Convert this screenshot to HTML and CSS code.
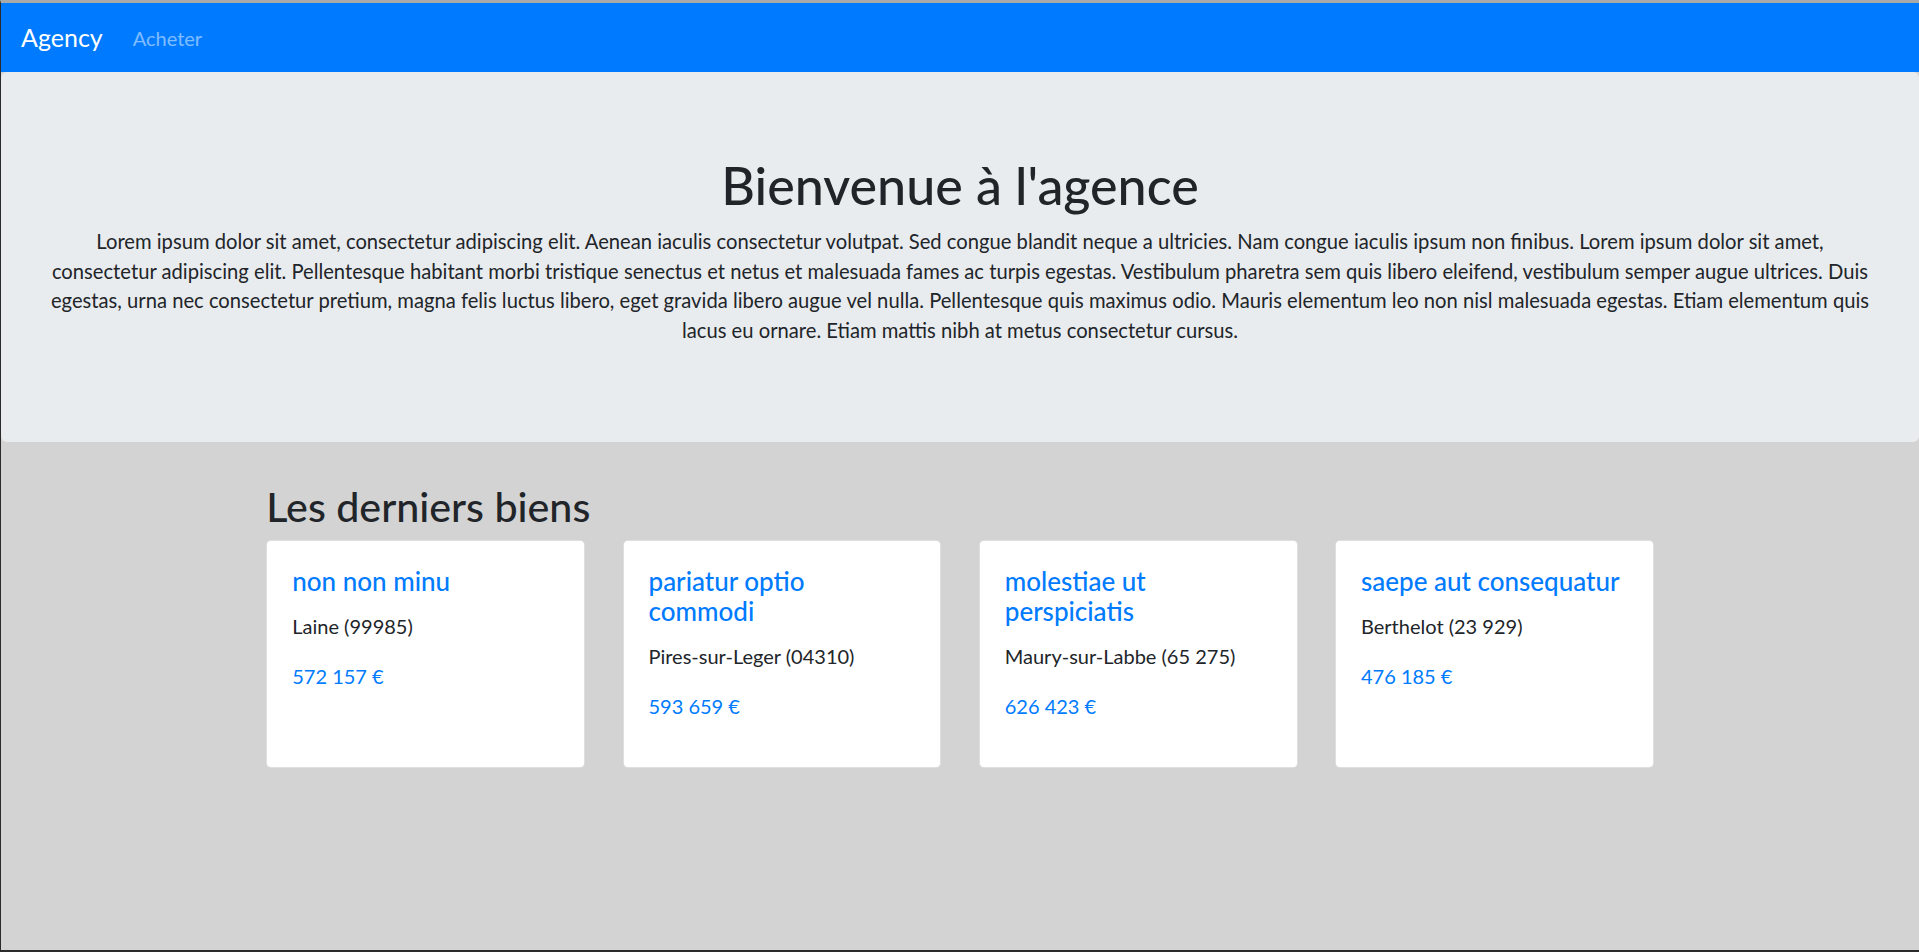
FILE: index.html
```html
<!DOCTYPE html>
<html lang="fr">
<head>
<meta charset="utf-8">
<title>Agency</title>
<link rel="stylesheet" href="styles.css">
</head>
<body>
<nav class="navbar">
  <a class="brand" href="#">Agency</a>
  <a class="nav-link" href="#">Acheter</a>
</nav>
<div class="jumbotron">
  <h1>Bienvenue à l'agence</h1>
  <p>Lorem ipsum dolor sit amet, consectetur adipiscing elit. Aenean iaculis consectetur volutpat. Sed congue blandit neque a ultricies. Nam congue iaculis ipsum non finibus. Lorem ipsum dolor sit amet,<br>consectetur adipiscing elit. Pellentesque habitant morbi tristique senectus et netus et malesuada fames ac turpis egestas. Vestibulum pharetra sem quis libero eleifend, vestibulum semper augue ultrices. Duis<br>egestas, urna nec consectetur pretium, magna felis luctus libero, eget gravida libero augue vel nulla. Pellentesque quis maximus odio. Mauris elementum leo non nisl malesuada egestas. Etiam elementum quis<br>lacus eu ornare. Etiam mattis nibh at metus consectetur cursus.</p>
</div>
<div class="container">
  <h2>Les derniers biens</h2>
  <div class="cards">
    <div class="card">
      <h5 class="card-title"><a href="#">non non minu</a></h5>
      <p class="card-text">Laine (99985)</p>
      <p class="price">572 157 €</p>
    </div>
    <div class="card">
      <h5 class="card-title"><a href="#">pariatur optio commodi</a></h5>
      <p class="card-text">Pires-sur-Leger (04310)</p>
      <p class="price">593 659 €</p>
    </div>
    <div class="card">
      <h5 class="card-title"><a href="#">molestiae ut perspiciatis</a></h5>
      <p class="card-text">Maury-sur-Labbe (65 275)</p>
      <p class="price">626 423 €</p>
    </div>
    <div class="card">
      <h5 class="card-title"><a href="#">saepe aut consequatur</a></h5>
      <p class="card-text">Berthelot (23 929)</p>
      <p class="price">476 185 €</p>
    </div>
  </div>
</div>
</body>
</html>
```
FILE: styles.css
```css
* { box-sizing: border-box; }
html { background: #d3d3d3; }
body {
  margin: 0;
  min-height: 100vh;
  background: #d3d3d3;
  border-top: 3px solid #a9a9a9;
  border-left: 1px solid #2b2b2b;
  border-bottom: 2px solid #2b2b2b;
  font-family: "Lato", "Liberation Sans", sans-serif;
  font-size: 20px;
  line-height: 1.5;
  color: #212529;
}
a { text-decoration: none; color: #007bff; }
.navbar {
  display: flex;
  align-items: center;
  height: 69px;
  padding: 10px 20px;
  background: #007bff;
}
.brand {
  color: #fff;
  font-size: 25px;
  line-height: 37.5px;
  padding: 6px 0;
  margin-right: 20px;
}
.nav-link {
  color: rgba(255,255,255,.5);
  padding: 10px;
}
.jumbotron {
  background: #e9ecef;
  padding: 83px 30px 77px;
  border-radius: 6px;
  text-align: center;
  margin-bottom: 40px;
}
h1 {
  margin: 0 0 12px;
  font-size: 52px;
  line-height: 60px;
  font-weight: 500;
}
.jumbotron p {
  margin: 0 0 20px;
  font-size: 20.2px;
  line-height: 29.6px;
}
.container {
  width: 1425px;
  margin: 0 auto;
  padding: 0 18.75px;
}
h2 {
  margin: 0 0 10px;
  font-size: 41.2px;
  line-height: 48px;
  font-weight: 500;
}
.cards {
  display: grid;
  grid-template-columns: repeat(4, 1fr);
  gap: 37.5px;
}
.card {
  background: #fff;
  border: 1px solid rgba(0,0,0,.125);
  border-radius: 5px;
  padding: 25px 25px 26px;
}
.card-title {
  margin: 0 0 15px;
  font-size: 26px;
  line-height: 30px;
  font-weight: 500;
}
.card p { margin: 0 0 20px; }
.price { color: #007bff; }
```
